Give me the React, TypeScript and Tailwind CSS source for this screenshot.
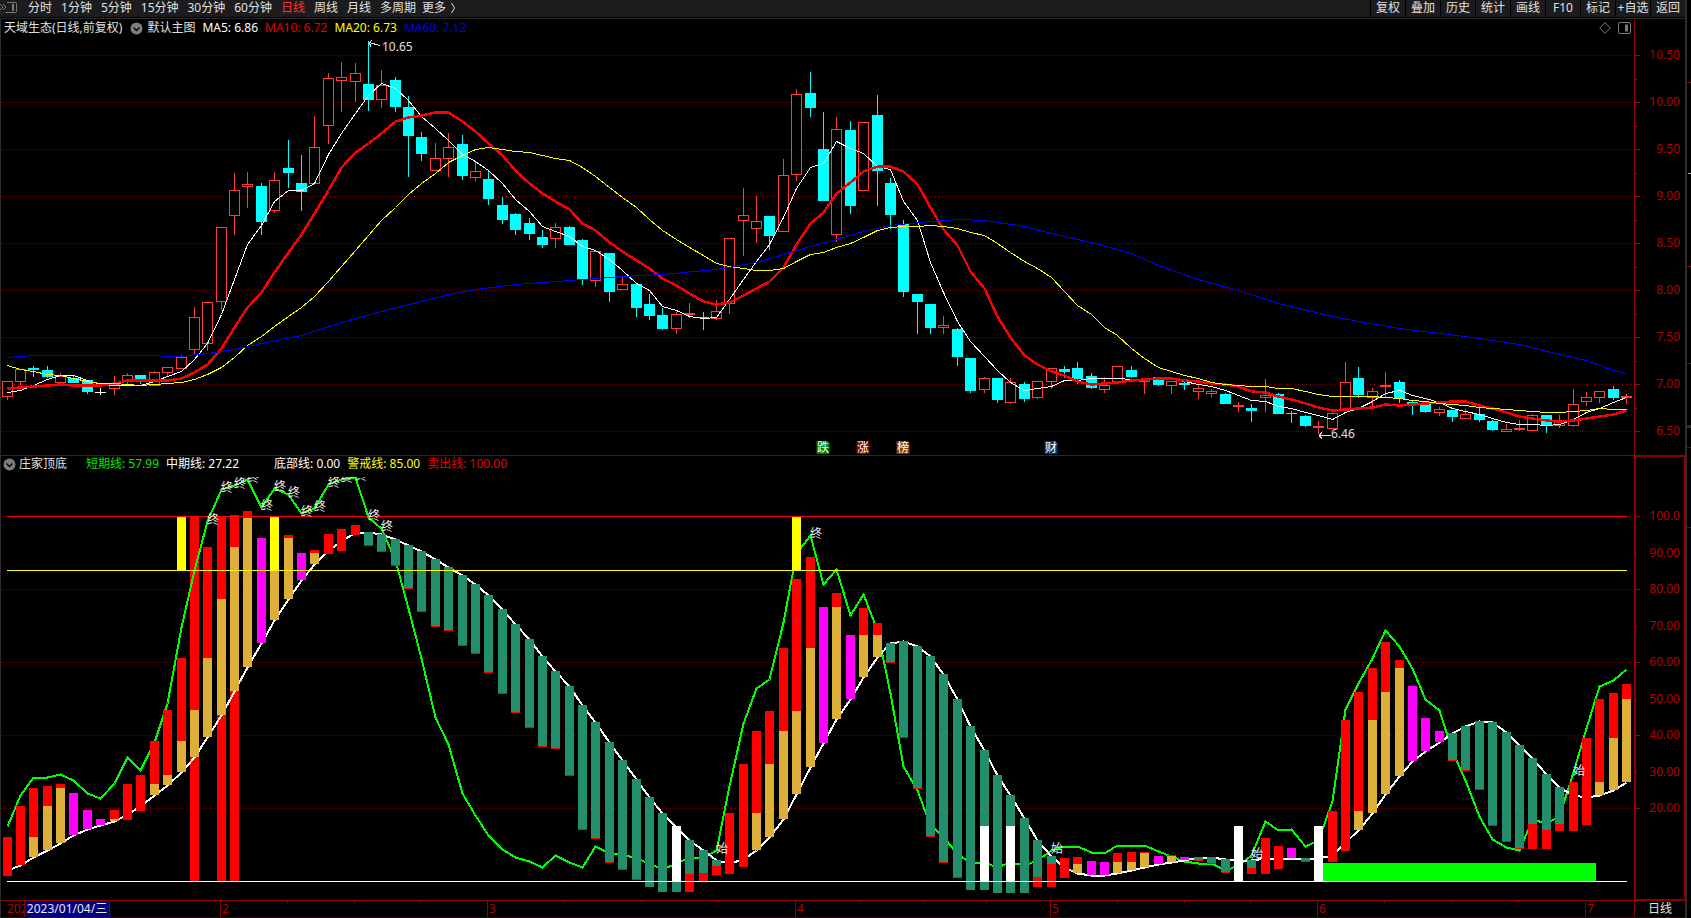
import { useState } from 'react'
import clsx from 'clsx'

type Candle = [kind: 'u' | 'd' | 'n', top: number, bottom: number, high: number, low: number]
type Segment = [index: number, kind: 'r' | 'g' | 'm' | 't' | 'T' | 'y' | 'w', top: number, bottom: number]

const PLOT_LEFT = 1
const PLOT_WIDTH = 1633
const STEP = 13.385

const PERIODS = ['分时', '1分钟', '5分钟', '15分钟', '30分钟', '60分钟', '日线', '周线', '月线']
const ACTIONS = ['复权', '叠加', '历史', '统计', '画线', 'F10', '标记', '+自选', '返回']

// u = up (hollow), d = down (solid), n = unchanged
const CANDLES: Candle[] = [
  ['u', 381, 397, 381, 400], ['u', 369, 382, 369, 385], ['d', 368, 370, 366, 377], ['d', 370, 377, 366, 378],
  ['u', 376, 383, 373, 383], ['d', 378, 383, 376, 383], ['d', 380, 392, 380, 394], ['n', 392, 392, 388, 395],
  ['u', 384, 389, 376, 395], ['u', 375, 381, 373, 384], ['d', 375, 382, 375, 384], ['u', 372, 386, 371, 386],
  ['u', 367, 373, 367, 376], ['u', 357, 369, 355, 369], ['u', 317, 350, 307, 354], ['u', 302, 344, 302, 351],
  ['u', 227, 302, 227, 310], ['u', 190, 216, 173, 235], ['u', 184, 187, 172, 208], ['d', 186, 222, 183, 235],
  ['u', 180, 211, 172, 213], ['d', 168, 173, 140, 188], ['d', 183, 192, 155, 211], ['u', 147, 184, 116, 184],
  ['u', 78, 126, 73, 144], ['u', 77, 81, 62, 112], ['u', 73, 82, 63, 102], ['d', 84, 100, 41, 111],
  ['u', 85, 100, 70, 108], ['d', 80, 107, 77, 112], ['d', 107, 136, 96, 177], ['d', 137, 154, 132, 161],
  ['u', 158, 171, 143, 171], ['u', 147, 159, 133, 177], ['d', 144, 176, 135, 180], ['u', 171, 178, 161, 181],
  ['d', 179, 199, 171, 205], ['d', 205, 220, 197, 224], ['d', 214, 230, 213, 235], ['d', 223, 234, 218, 240],
  ['d', 237, 245, 230, 248], ['u', 227, 239, 223, 248], ['d', 227, 245, 226, 245], ['d', 240, 280, 239, 285],
  ['u', 251, 281, 251, 287], ['d', 253, 292, 253, 302], ['u', 284, 290, 277, 290], ['d', 284, 308, 284, 317],
  ['d', 304, 316, 294, 320], ['d', 315, 329, 308, 330], ['u', 314, 329, 312, 334], ['u', 313, 315, 303, 318],
  ['d', 317, 318, 312, 330], ['u', 311, 319, 300, 320], ['u', 238, 304, 238, 314], ['u', 215, 221, 188, 256],
  ['u', 221, 229, 196, 243], ['d', 216, 236, 216, 250], ['u', 175, 232, 159, 232], ['u', 94, 175, 89, 181],
  ['d', 93, 108, 72, 117], ['d', 149, 201, 112, 201], ['u', 129, 235, 117, 242], ['d', 130, 206, 121, 214],
  ['u', 122, 191, 122, 191], ['d', 115, 171, 95, 206], ['d', 183, 215, 178, 229], ['d', 224, 292, 220, 297],
  ['d', 294, 302, 294, 334], ['d', 304, 328, 304, 334], ['u', 325, 328, 316, 334], ['d', 329, 357, 328, 366],
  ['d', 358, 391, 358, 393], ['u', 378, 390, 377, 393], ['d', 378, 400, 378, 403], ['u', 382, 403, 378, 404],
  ['d', 384, 399, 382, 402], ['u', 381, 398, 381, 399], ['u', 368, 382, 368, 389], ['d', 369, 372, 366, 378],
  ['d', 368, 379, 362, 384], ['d', 376, 388, 373, 389], ['u', 385, 390, 377, 393], ['u', 366, 382, 366, 382],
  ['d', 370, 377, 366, 378], ['u', 379, 382, 379, 394], ['d', 377, 385, 377, 386], ['u', 381, 386, 381, 394],
  ['d', 383, 385, 381, 390], ['u', 388, 392, 384, 399], ['u', 391, 394, 389, 397], ['d', 394, 404, 393, 404],
  ['u', 405, 407, 402, 412], ['d', 408, 411, 404, 422], ['u', 395, 398, 379, 412], ['d', 394, 414, 393, 414],
  ['d', 413, 414, 411, 423], ['d', 416, 426, 415, 427], ['u', 426, 428, 421, 434], ['u', 413, 429, 410, 429],
  ['u', 382, 410, 362, 410], ['d', 378, 395, 367, 398], ['u', 391, 398, 388, 407], ['u', 385, 387, 372, 397],
  ['d', 382, 399, 380, 403], ['d', 402, 405, 401, 415], ['d', 404, 412, 404, 413], ['u', 409, 413, 407, 416],
  ['d', 410, 417, 410, 422], ['u', 414, 419, 409, 419], ['d', 414, 420, 407, 422], ['d', 421, 430, 420, 431],
  ['u', 429, 432, 424, 432], ['u', 428, 430, 420, 431], ['u', 415, 431, 414, 431], ['d', 415, 425, 415, 433],
  ['u', 421, 426, 415, 428], ['u', 404, 426, 389, 427], ['u', 397, 402, 392, 406], ['u', 391, 398, 391, 403],
  ['d', 389, 398, 386, 400], ['u', 396, 398, 394, 404],
]

// averages of the sessions before the window has filled up
const MA5_HEAD = [392, 390, 385, 379]
const MA10_HEAD = [388, 387, 386, 385, 384, 385, 385, 385, 383]
const MA20_HEAD = [365, 369, 371, 374, 375, 378, 381, 383, 383, 384, 385, 384, 383, 382, 379, 374, 367, 357, 345]

const MA60: [number, number][] = [
  [0, 357], [2, 355], [10, 355], [13, 356], [15, 353], [17, 349], [19, 343], [22, 335], [25, 322], [28, 311],
  [31, 301], [33, 294], [35, 289], [38, 284], [42, 280], [46, 276], [49, 274], [53, 269], [56, 262], [60, 246],
  [62, 239], [64, 231], [66, 225], [69, 221], [71, 219], [73, 220], [76, 226], [78, 233], [81, 242], [84, 253],
  [86, 265], [89, 279], [92, 290], [95, 303], [99, 316], [101, 321], [104, 328], [109, 336], [113, 344],
  [116, 354], [118, 360], [119, 365], [120, 370], [121, 373],
]

const SHORT_LINE = [
  826, 795, 777, 777, 774, 780, 793, 798, 783, 757, 770, 742, 703, 627, 570, 521, 489, 485, 479, 507,
  488, 494, 513, 508, 484, 479, 477, 517, 528, 560, 608, 658, 717, 744, 793, 815, 835, 849, 857, 861,
  867, 855, 862, 867, 846, 853, 854, 858, 863, 869, 863, 857, 857, 850, 786, 723, 688, 679, 622, 553,
  535, 584, 569, 615, 594, 630, 693, 766, 790, 825, 836, 854, 862, 862, 867, 862, 865, 860, 850, 846,
  846, 852, 853, 845, 845, 845, 851, 856, 861, 863, 863, 870, 865, 855, 821, 830, 829, 846, 840, 801,
  709, 683, 658, 630, 646, 668, 699, 710, 751, 780, 816, 839, 847, 850, 819, 823, 816, 772, 728, 686,
  680, 669,
]

const MID_LINE = [
  870, 865, 857, 850, 843, 835, 829, 825, 821, 814, 806, 795, 785, 772, 757, 737, 715, 691, 667, 643,
  620, 599, 580, 564, 550, 541, 532, 532, 534, 539, 545, 551, 559, 567, 575, 584, 595, 609, 624, 639,
  656, 671, 686, 705, 722, 742, 760, 779, 797, 813, 827, 840, 850, 860, 863, 859, 850, 837, 819, 794,
  767, 743, 719, 699, 677, 657, 643, 641, 646, 656, 674, 699, 726, 750, 775, 795, 818, 840, 856, 867,
  873, 875, 875, 873, 870, 867, 864, 862, 860, 857, 857, 859, 860, 860, 858, 858, 858, 858, 858, 855,
  842, 830, 813, 794, 776, 761, 751, 742, 733, 726, 721, 722, 732, 745, 758, 774, 787, 795, 797, 795,
  790, 782,
]

// r red, g gold, m magenta, t teal, T teal with a red foot, y yellow, w white
const SEGMENTS: Segment[] = [
  [0, 'r', 837, 876], [1, 'r', 806, 865], [2, 'r', 788, 837], [2, 'g', 837, 857], [3, 'r', 786, 806],
  [3, 'g', 806, 850], [4, 'r', 784, 788], [4, 'g', 788, 843], [5, 'm', 793, 835], [6, 'm', 810, 829],
  [7, 'm', 819, 825], [8, 'r', 810, 819], [8, 'g', 819, 821], [9, 'r', 784, 820], [10, 'r', 775, 811],
  [11, 'r', 741, 784], [11, 'g', 784, 795], [12, 'r', 710, 775], [12, 'g', 775, 785], [13, 'y', 517, 570],
  [13, 'r', 658, 741], [13, 'g', 741, 772], [14, 'g', 710, 757], [15, 'r', 547, 658], [15, 'g', 658, 737],
  [16, 'g', 599, 715], [17, 'r', 515, 547], [17, 'g', 547, 691], [18, 'r', 511, 518], [18, 'g', 518, 667],
  [19, 'm', 538, 643], [20, 'y', 517, 570], [20, 'g', 570, 620], [21, 'r', 535, 538], [21, 'g', 538, 599],
  [22, 'm', 553, 580], [23, 'r', 550, 553], [23, 'g', 553, 564], [24, 'r', 534, 554], [25, 'r', 529, 551],
  [26, 'r', 525, 535], [27, 'T', 532, 546], [28, 'T', 534, 552], [29, 'T', 539, 566], [30, 'T', 545, 589],
  [31, 'T', 551, 612], [32, 'T', 559, 627], [33, 'T', 567, 631], [34, 'T', 575, 646], [35, 'T', 584, 654],
  [36, 'T', 595, 673], [37, 'T', 609, 694], [38, 'T', 624, 713], [39, 'T', 639, 728], [40, 'T', 656, 747],
  [41, 'T', 671, 749], [42, 'T', 686, 776], [43, 'T', 705, 830], [44, 'T', 722, 839], [45, 'T', 742, 863],
  [46, 'T', 760, 870], [47, 'T', 779, 880], [48, 't', 797, 887], [49, 't', 813, 892], [50, 'w', 826, 881],
  [50, 't', 881, 892], [51, 't', 840, 874], [51, 'r', 874, 892], [52, 't', 850, 873], [52, 'r', 873, 881],
  [53, 't', 860, 866], [53, 'r', 866, 875], [54, 'r', 813, 874], [55, 'r', 764, 867], [56, 'r', 731, 813],
  [56, 'g', 813, 850], [57, 'r', 711, 764], [57, 'g', 764, 837], [58, 'r', 648, 731], [58, 'g', 731, 819],
  [59, 'y', 517, 570], [59, 'r', 579, 711], [59, 'g', 711, 794], [60, 'r', 557, 648], [60, 'g', 648, 767],
  [61, 'm', 607, 743], [62, 'r', 593, 607], [62, 'g', 607, 719], [63, 'm', 635, 699], [64, 'r', 608, 635],
  [64, 'g', 635, 677], [65, 'r', 623, 635], [65, 'g', 635, 657], [66, 'T', 643, 663], [67, 'T', 641, 738],
  [68, 'T', 646, 789], [69, 'T', 656, 837], [70, 'T', 674, 863], [71, 'T', 699, 878], [72, 't', 726, 890],
  [73, 't', 750, 890], [73, 'w', 826, 881], [74, 't', 775, 893], [75, 't', 795, 893], [75, 'w', 826, 881],
  [76, 't', 818, 893], [77, 't', 840, 877], [77, 'r', 877, 887], [78, 't', 856, 864], [78, 'r', 864, 887],
  [79, 'r', 858, 878], [80, 'r', 857, 864], [80, 'g', 864, 873], [81, 'm', 861, 875], [82, 'm', 862, 875],
  [83, 'r', 853, 862], [83, 'g', 862, 873], [84, 'r', 852, 862], [84, 'g', 862, 870], [85, 'r', 852, 853],
  [85, 'g', 853, 867], [86, 'm', 856, 864], [87, 'r', 855, 856], [87, 'g', 856, 862], [88, 'm', 857, 860],
  [89, 'T', 857, 861], [90, 'T', 857, 864], [91, 'T', 859, 873], [92, 'w', 826, 881], [93, 't', 860, 868],
  [93, 'r', 868, 874], [94, 'r', 838, 874], [95, 'r', 846, 869], [96, 'm', 848, 858], [97, 'T', 858, 862],
  [98, 'w', 826, 881], [99, 'r', 811, 862], [100, 'r', 720, 851], [101, 'r', 692, 811], [101, 'g', 811, 830],
  [102, 'r', 668, 720], [102, 'g', 720, 813], [103, 'r', 642, 692], [103, 'g', 692, 794], [104, 'r', 660, 668],
  [104, 'g', 668, 776], [105, 'm', 686, 761], [106, 'm', 718, 751], [107, 'm', 731, 742], [108, 'T', 733, 761],
  [109, 'T', 726, 771], [110, 'T', 721, 790], [111, 'T', 722, 826], [112, 'T', 732, 842], [113, 'T', 745, 849],
  [114, 't', 758, 824], [114, 'r', 824, 849], [115, 't', 774, 830], [115, 'r', 830, 849], [116, 't', 787, 824],
  [116, 'r', 824, 831], [117, 'r', 782, 831], [118, 'r', 738, 825], [119, 'r', 699, 782], [119, 'g', 782, 795],
  [120, 'r', 693, 738], [120, 'g', 738, 790], [121, 'r', 684, 699], [121, 'g', 699, 782],
]

const SEGMENT_COLORS = {
  r: '#ff0000',
  g: '#ddae38',
  m: '#ff00ff',
  t: '#238e6b',
  T: '#238e6b',
  y: '#ffff00',
  w: '#ffffff',
}

const FULL_BARS = [14, 16, 17]

const MARKERS = [
  ...[15, 16, 17, 18, 19, 20, 21, 22, 23, 24, 25, 26, 27, 28, 60].map(i => ({ i, text: '终' })),
  ...[53, 78, 93, 117].map(i => ({ i, text: '始' })),
]

const EVENTS = [
  { i: 61, text: '跌', color: 'bg-[#008000]' },
  { i: 64, text: '涨', color: 'bg-[#800000]' },
  { i: 67, text: '榜', color: 'bg-[#804000]' },
  { i: 78, text: '财', color: 'bg-[#003a70]' },
]

const MONTHS = [
  { x: 220, label: '2' },
  { x: 487, label: '3' },
  { x: 795, label: '4' },
  { x: 1050, label: '5' },
  { x: 1317, label: '6' },
  { x: 1585, label: '7' },
]
const WEEK_TICKS = [287, 354, 420, 564, 641, 718, 859, 923, 986, 1117, 1184, 1250, 1384, 1451, 1518]

const PRICE_LABELS = ['10.50', '10.00', '9.50', '9.00', '8.50', '8.00', '7.50', '7.00', '6.50']
const INDICATOR_LABELS = [
  { y: 516, text: '100.0' },
  { y: 553, text: '90.00' },
  { y: 589, text: '80.00' },
  { y: 626, text: '70.00' },
  { y: 662, text: '60.00' },
  { y: 699, text: '50.00' },
  { y: 735, text: '40.00' },
  { y: 772, text: '30.00' },
  { y: 808, text: '20.00' },
]

const cx = (i: number) => Math.floor(7 + STEP * i)
const pct = (x: number) => `${((x - PLOT_LEFT) / PLOT_WIDTH) * 100}%`
const toPoints = (list: [number, number][]) => list.map(([i, y]) => `${cx(i) + 0.5},${y + 0.5}`).join(' ')
const seriesPoints = (ys: number[]) => toPoints(ys.map((y, i) => [i, y]))

function movingAverage(size: number, head: number[]) {
  const closes = CANDLES.map(([kind, top, bottom]) => (kind === 'd' ? bottom : top))
  return closes.map((_, i) => {
    if (i < size - 1) return head[i]
    const part = closes.slice(i - size + 1, i + 1)
    return Math.round(part.reduce((a, b) => a + b, 0) / size)
  })
}

function FoldButton({ label }: { label: string }) {
  return (
    <button aria-label={label} className="shrink-0">
      <svg width="13" height="13" viewBox="0 0 13 13">
        <circle cx="6.5" cy="6.5" r="6" fill="#7d7d7d" />
        <path d="M3.5 5.5l3 3 3-3" fill="none" stroke="#000" strokeWidth="1.3" />
      </svg>
    </button>
  )
}

function TopBar() {
  const [period, setPeriod] = useState('日线')

  return (
    <header className="flex h-[18px] border-b border-black bg-[#1c1c1e] leading-[15px] text-[#e0e0e0]">
      <button aria-label="展开侧栏" className="mr-[11px] shrink-0">
        <svg width="17" height="17" viewBox="0 0 17 17" fill="none" stroke="#7a7a7a">
          <path d="M0 4l3 3-3 3M3 4l3 3-3 3" />
          <path d="M7 2.5h8.5q1 0 1 1v8q0 1-1 1H5.5" />
          <rect x="12" y="4" width="2" height="7" fill="#7a7a7a" stroke="none" />
        </svg>
      </button>
      <nav className="flex items-start gap-[9px]">
        {PERIODS.map(name => (
          <button
            key={name}
            onClick={() => setPeriod(name)}
            className={clsx('whitespace-nowrap', name === period && 'text-[#ff3232]')}
          >
            {name}
          </button>
        ))}
        <span className="flex gap-[6px]">
          <button className="whitespace-nowrap">多周期</button>
          <button className="flex items-center gap-1 whitespace-nowrap">
            更多
            <svg width="7" height="12" viewBox="0 0 7 12" fill="none" stroke="#e0e0e0">
              <path d="M1.5 1l3 5-3 5" />
            </svg>
          </button>
        </span>
      </nav>
      <div className="ml-auto flex">
        {ACTIONS.map(name => (
          <button
            key={name}
            className="flex w-[35px] items-start justify-center whitespace-nowrap border-l border-black"
          >
            {name}
          </button>
        ))}
      </div>
    </header>
  )
}

function GridLines({ rows }: { rows: number[] }) {
  return (
    <g fill="none" stroke="#8c0000" strokeDasharray="1 3">
      {rows.map(y => (
        <line key={y} x1="2" x2="1634" y1={y + 0.5} y2={y + 0.5} />
      ))}
    </g>
  )
}

function PriceChart() {
  return (
    <div className="relative h-[418px]">
      <svg
        className="block h-full w-full"
        viewBox="1 37 1633 418"
        preserveAspectRatio="none"
        shapeRendering="crispEdges"
        role="img"
        aria-label="日线K线图"
      >
        <GridLines rows={PRICE_LABELS.map((_, n) => 55 + n * 47)} />
        {CANDLES.map(([kind, top, bottom, high, low], i) => {
          const x = cx(i)
          if (kind === 'n') {
            return (
              <g key={i} fill="#fff">
                <rect x={x} y={high} width="1" height={low - high} />
                <rect x={x - 5} y={top} width="11" height="1" />
              </g>
            )
          }
          if (kind === 'd') {
            return (
              <g key={i} fill="#00ffff">
                <rect x={x} y={high} width="1" height={low - high} />
                <rect x={x - 5} y={top} width="11" height={bottom - top} />
              </g>
            )
          }
          return (
            <g key={i}>
              <rect x={x} y={high} width="1" height={low - high} fill="#ff3c3c" />
              <rect x={x - 4.5} y={top + 0.5} width="10" height={bottom - top - 1} fill="#000" stroke="#ff3c3c" />
            </g>
          )
        })}
        <g fill="none">
          <polyline points={seriesPoints(movingAverage(5, MA5_HEAD))} stroke="#fff" />
          <polyline points={seriesPoints(movingAverage(10, MA10_HEAD))} stroke="#ff0000" strokeWidth="2.5" />
          <polyline points={seriesPoints(movingAverage(20, MA20_HEAD))} stroke="#ffff00" />
          <polyline points={toPoints(MA60)} stroke="#0000ff" />
          <path d="M380 45.5L369 42.5M369 42.5L372 40.5M369 42.5L371 46.5" stroke="#e0e0e0" />
          <path d="M1331 435.5H1319M1319 435.5L1322 432.5M1319 435.5L1322 438.5" stroke="#e0e0e0" />
        </g>
      </svg>
      <span className="absolute top-[2px] leading-4 text-[#e0e0e0]" style={{ left: pct(382) }}>10.65</span>
      <span className="absolute top-[389px] leading-4 text-[#e0e0e0]" style={{ left: pct(1331) }}>6.46</span>
      {EVENTS.map(({ i, text, color }) => (
        <button
          key={text}
          className={clsx('absolute bottom-[1px] h-[13px] w-[13px] -translate-x-1/2 rounded-tr-[3px] text-white leading-[13px]', color)}
          style={{ left: pct(cx(i)) }}
        >
          {text}
        </button>
      ))}
    </div>
  )
}

function IndicatorChart() {
  return (
    <div className="relative h-[423px] overflow-hidden">
      <svg
        className="block h-full w-full"
        viewBox="1 477 1633 423"
        preserveAspectRatio="none"
        shapeRendering="crispEdges"
        role="img"
        aria-label="庄家顶底"
      >
        <GridLines rows={[516, 589, 662, 735, 808]} />
        {FULL_BARS.map(i => (
          <rect key={i} x={cx(i) - 4} y="516" width="9" height="365" fill="#ff0000" />
        ))}
        <rect x="1323" y="863" width="273" height="18" fill="#00ff00" />
        <g fill="none" strokeWidth="2">
          <polyline points={seriesPoints(SHORT_LINE)} stroke="#00ff00" />
          <polyline points={seriesPoints(MID_LINE)} stroke="#fff" />
        </g>
        {SEGMENTS.map(([i, kind, top, bottom], n) => (
          <g key={n}>
            <rect x={cx(i) - 4} y={top} width="9" height={bottom - top} fill={SEGMENT_COLORS[kind]} />
            {kind === 'T' && <rect x={cx(i) - 4} y={bottom - 1} width="9" height="1" fill="#ff0000" />}
          </g>
        ))}
        <rect x="7" y="516" width="1620" height="1" fill="#ff0000" />
        <rect x="7" y="570" width="1620" height="1" fill="#ffff00" />
        <rect x="7" y="881" width="1620" height="1" fill="#fff" />
      </svg>
      {MARKERS.map(({ i, text }) => (
        <span
          key={i}
          className="absolute h-3 leading-3 text-[#f0f0f0]"
          style={{ left: pct(cx(i)), top: SHORT_LINE[i] - 477 - 7 }}
        >
          {text}
        </span>
      ))}
    </div>
  )
}

function PriceAxis() {
  return (
    <svg className="block" width="50" height="436" shapeRendering="crispEdges" fill="#b40000">
      {PRICE_LABELS.map((label, n) => (
        <g key={label}>
          <rect x="0" y={36 + n * 47} width="5" height="1" />
          {n < 8 && <rect x="0" y={60 + n * 47} width="2" height="1" />}
          <text x="45" y={40 + n * 47} textAnchor="end">{label}</text>
        </g>
      ))}
    </svg>
  )
}

function IndicatorAxis() {
  return (
    <svg className="block" width="48" height="441" shapeRendering="crispEdges" fill="#b40000">
      {INDICATOR_LABELS.map(({ y, text }, n) => (
        <g key={text}>
          <rect x="0" y={y - 457} width={n % 2 ? 1 : 4} height="1" />
          <text x="44" y={y - 453} textAnchor="end">{text}</text>
        </g>
      ))}
    </svg>
  )
}

function TimeAxis() {
  return (
    <footer className="flex h-[17px] border-b border-[#2a0c0c] text-[#b40000]">
      <div className="relative h-4 flex-1 overflow-hidden">
        <span className="absolute left-[6px] leading-4">202</span>
        <time className="absolute left-[23px] z-10 h-4 w-[86px] border-x border-[#8c0000] bg-[#000080] text-center leading-4 text-[#e8e8e8]">
          2023/01/04/三
        </time>
        {MONTHS.map(({ x, label }) => (
          <span key={label} className="absolute h-4 border-l border-[#8c0000] pl-px leading-4" style={{ left: pct(x) }}>
            {label}
          </span>
        ))}
        {WEEK_TICKS.map(x => (
          <span key={x} className="absolute h-[2px] w-px bg-[#8c0000]" style={{ left: pct(x) }} />
        ))}
      </div>
      <button className="w-[51px] border-l border-[#8c0000] text-center leading-4 text-[#e0e0e0]">日线</button>
    </footer>
  )
}

export default function App() {
  return (
    <div className="flex bg-black font-['Noto_Sans','Noto_Sans_CJK_SC',sans-serif] text-[12px]">
      <div className="min-w-0 flex-1">
        <TopBar />
        <main className="border-l border-t border-[#2d2d2d]">
          <section className="flex border-b border-[#8c0000]">
            <div className="min-w-0 flex-1">
              <div className="flex h-[18px] items-center gap-[7px] whitespace-nowrap px-[3px] leading-4">
                <div className="flex items-center gap-1 text-[#e0e0e0]">
                  <h1 className="mr-1">天域生态(日线,前复权)</h1>
                  <FoldButton label="收起主图" />
                  <span>默认主图</span>
                </div>
                <span className="text-white">MA5: 6.86</span>
                <span className="text-[#e60000]">MA10: 6.72</span>
                <span className="text-[#ffff00]">MA20: 6.73</span>
                <span className="text-[#0000e6]">MA60: 7.12</span>
                <button aria-label="标记" className="ml-auto">
                  <svg width="12" height="12" viewBox="0 0 12 12" fill="none" stroke="#7a7a7a">
                    <path d="M6 .7L11.3 6 6 11.3.7 6z" />
                  </svg>
                </button>
                <button aria-label="右侧面板">
                  <svg width="13" height="12" viewBox="0 0 13 12" fill="none" stroke="#7a7a7a">
                    <rect x=".5" y=".5" width="12" height="11" rx="1.5" />
                    <rect x="7" y="2.5" width="3" height="7" fill="#7a7a7a" stroke="none" />
                  </svg>
                </button>
              </div>
              <PriceChart />
            </div>
            <div className="w-[51px] border-l border-[#8c0000]">
              <PriceAxis />
            </div>
          </section>

          <section className="flex border-b border-[#8c0000]">
            <div className="min-w-0 flex-1">
              <div className="mb-[5px] flex h-4 items-center gap-[7px] whitespace-nowrap pl-[2px] leading-4">
                <div className="mr-3 flex items-center gap-[3px] text-[#e0e0e0]">
                  <FoldButton label="收起指标" />
                  <h2>庄家顶底</h2>
                </div>
                <span className="text-[#00e600]">短期线: 57.99</span>
                <span className="mr-7 text-white">中期线: 27.22</span>
                <span className="text-white">底部线: 0.00</span>
                <span className="text-[#ffff00]">警戒线: 85.00</span>
                <span className="text-[#e60000]">卖出线: 100.00</span>
              </div>
              <IndicatorChart />
            </div>
            <div className="w-[51px] border-b border-l-2 border-r border-t border-[#8c0000]">
              <IndicatorAxis />
            </div>
          </section>

          <TimeAxis />
        </main>
      </div>

      {/* edge of the quote panel */}
      <aside className="w-[6px] border-l-2 border-[#2d2d2d]">
        <svg className="block" width="4" height="560" shapeRendering="crispEdges">
          {[82, 266, 363, 425, 447, 527].map(y => (
            <rect key={y} x="0" y={y} width="4" height="1" fill="#8c0000" />
          ))}
          <rect x="1" y="173" width="3" height="1" fill="#ddae38" />
          <rect x="0" y="426" width="4" height="2" fill="#2d2d2d" />
        </svg>
      </aside>
    </div>
  )
}
